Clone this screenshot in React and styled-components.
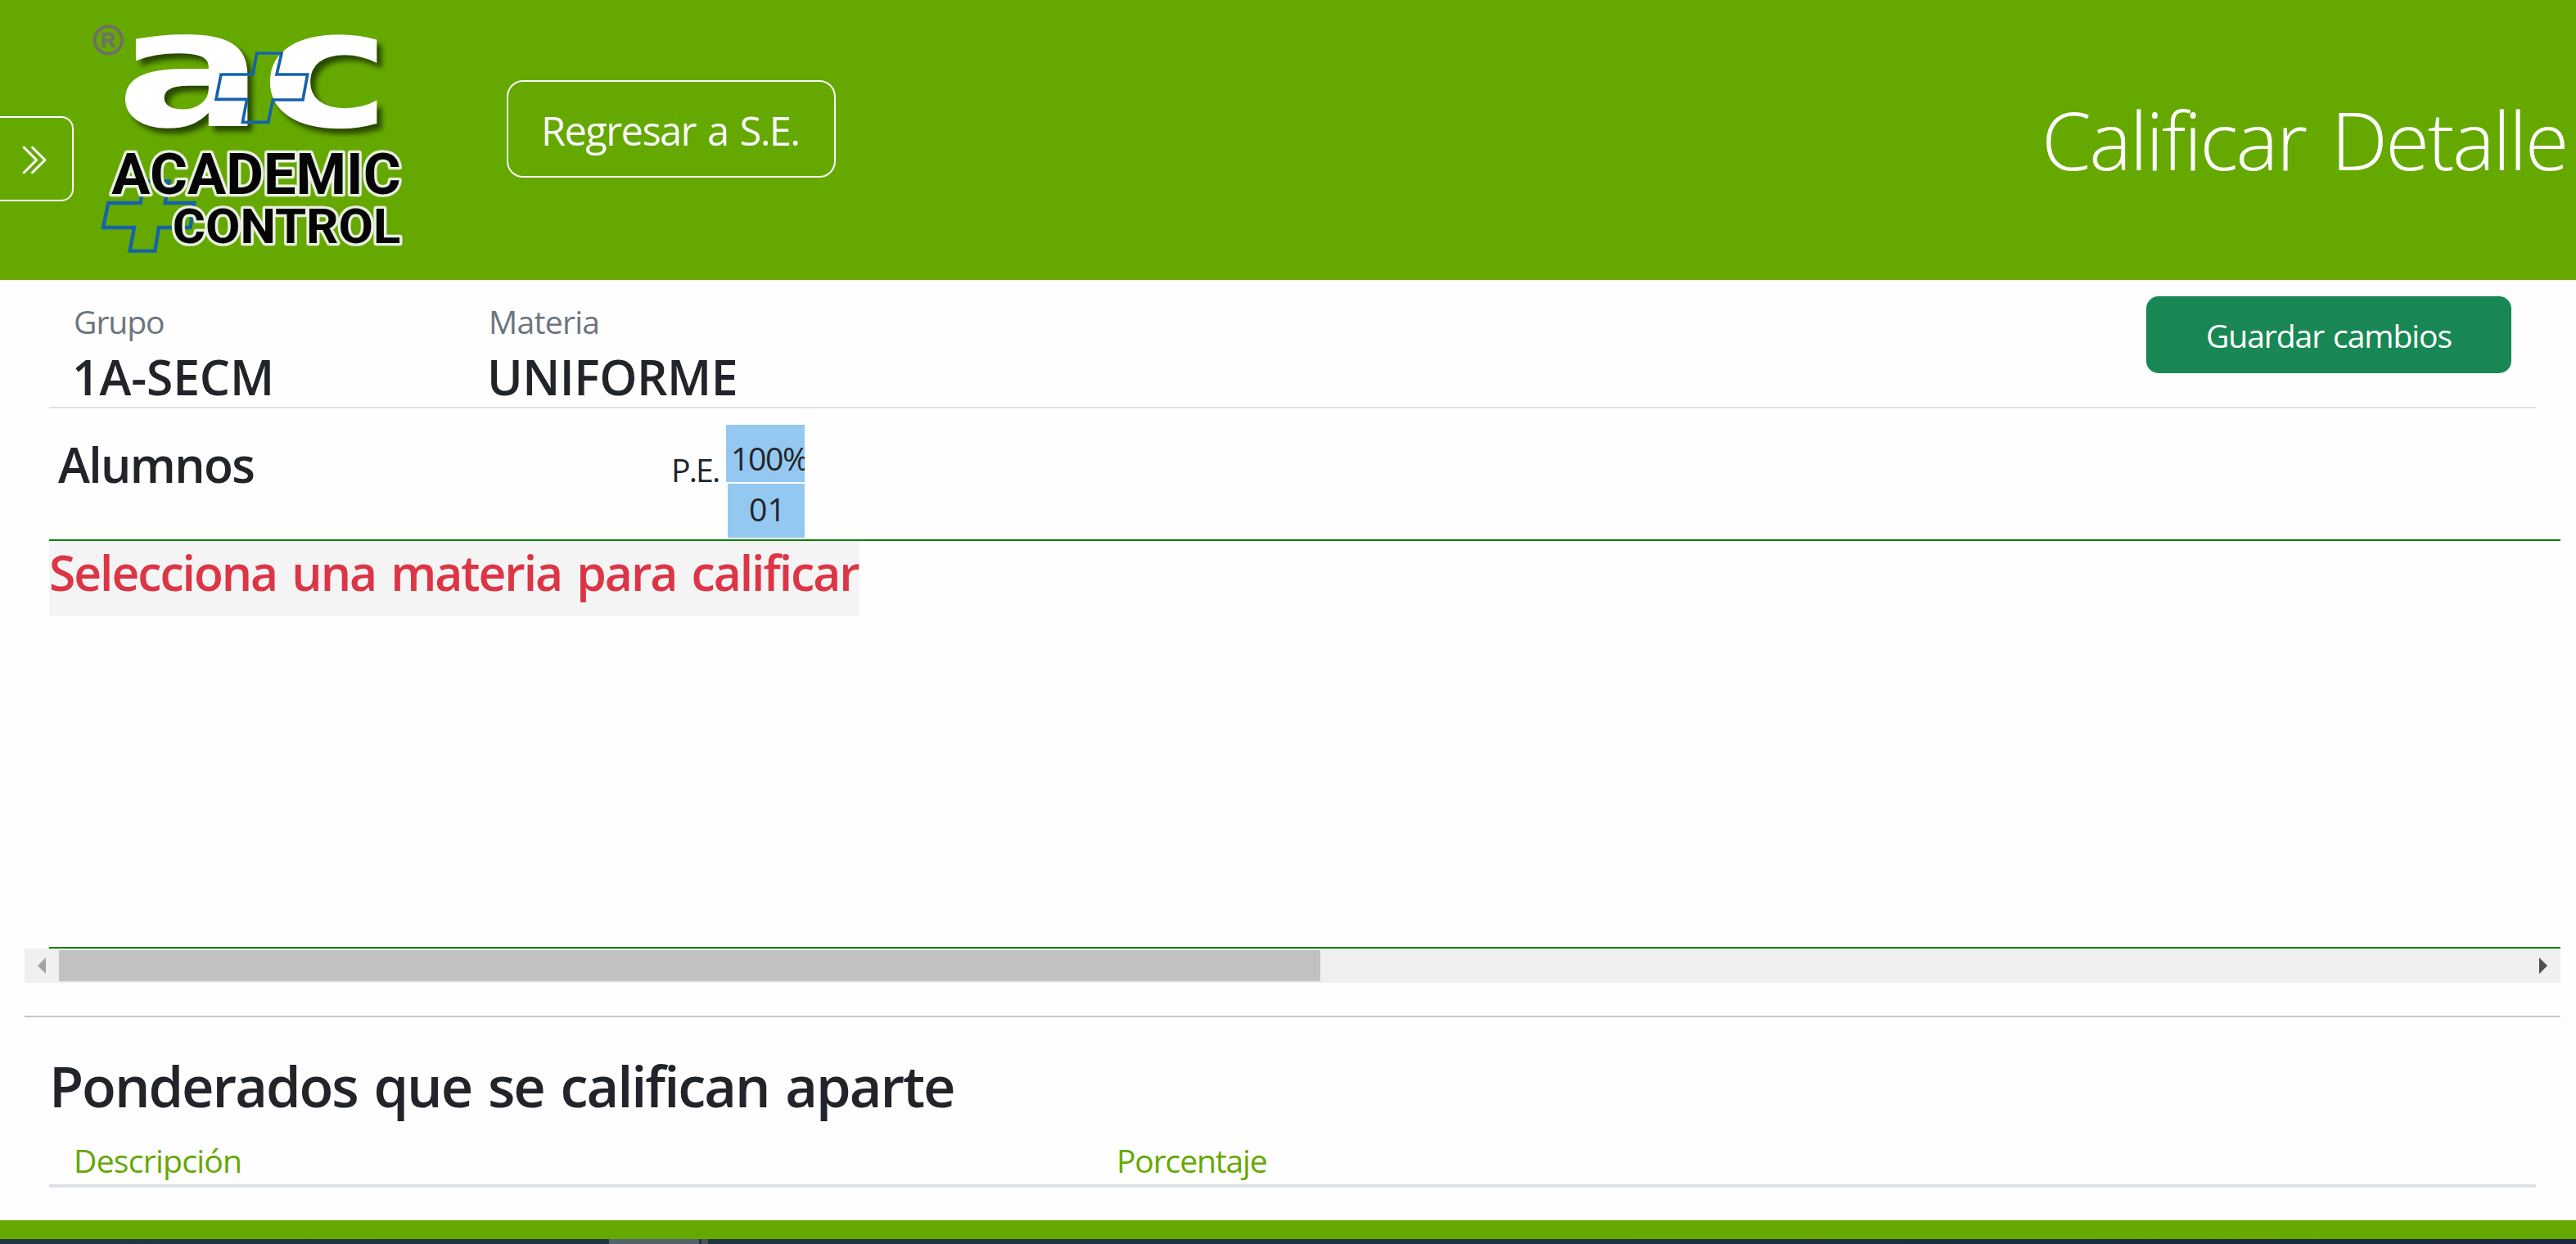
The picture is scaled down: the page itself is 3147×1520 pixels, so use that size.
import React from "react";
import styled, { createGlobalStyle } from "styled-components";
import { BsChevronDoubleRight } from "react-icons/bs";

const GlobalStyle = createGlobalStyle`
  * { box-sizing: border-box; }
  body { margin: 0; background: #fff; }
  h1, h2, h3, p { margin: 0; }
  button { font-family: inherit; cursor: pointer; }
`;

const Page = styled.div`
  width: 3147px;
  height: 1520px;
  overflow: hidden;
  display: flex;
  flex-direction: column;
  background: #fefefe;
  color: #212529;
  font-family: "Open Sans", "Noto Sans", sans-serif;
  font-variant-ligatures: none;
  white-space: nowrap;
`;

const Header = styled.header`
  height: 342px;
  flex: none;
  display: flex;
  align-items: flex-start;
  background: #65a900;
`;

const MenuToggle = styled.button`
  width: 90px;
  height: 104px;
  margin-top: 142px;
  padding: 2px 0 0 19px;
  display: flex;
  align-items: center;
  color: #fff;
  background: transparent;
  border: 2px solid #fff;
  border-left: 0;
  border-radius: 0 15px 15px 0;
`;

const Logo = styled.svg`
  width: 400px;
  height: 300px;
  margin: 20px 0 0 10px;
  flex: none;
  overflow: visible;
`;

const LogoInitials = styled.g`
  fill: #fff;
  font: 700 600px "DejaVu Sans", sans-serif;
  filter: drop-shadow(18px 20px 10px rgba(20, 40, 0, 0.75));
`;

const LogoWord = styled.text`
  font-family: Roboto, sans-serif;
  font-weight: 700;
  font-size: ${(p) => p.$size}px;
  fill: #050505;
  stroke: #e9f0e0;
  stroke-width: 20px;
  stroke-linejoin: round;
  paint-order: stroke;
`;

const LogoMark = styled.text`
  font: 700 76px "Liberation Sans", sans-serif;
  fill: #6f7166;
  stroke: #6f7166;
  stroke-width: 2px;
`;

const BackButton = styled.button`
  width: 402px;
  height: 119px;
  margin: 98px 0 0 119px;
  padding: 3px 0 0 40px;
  text-align: left;
  font-size: 49px;
  letter-spacing: -1.7px;
  word-spacing: 3px;
  color: #f8f9fa;
  background: transparent;
  border: 2px solid #f8f9fa;
  border-radius: 20px;
`;

const Title = styled.h1`
  margin: 103px 11px 0 auto;
  font-size: 98px;
  line-height: 134px;
  font-weight: 300;
  letter-spacing: -2.5px;
  word-spacing: 8px;
  color: #fff;
`;

const Summary = styled.section`
  height: 157px;
  flex: none;
  margin: 0 49px 0 60px;
  padding: 21px 30px 0;
  display: flex;
  align-items: flex-start;
  border-bottom: 2px solid #dee2e6;
`;

const Field = styled.div`
  width: ${(p) => p.$width}px;
`;

const FieldLabel = styled.p`
  font-size: 39.2px;
  line-height: 60px;
  letter-spacing: ${(p) => p.$track}px;
  color: #6c757d;
`;

const FieldValue = styled.h3`
  font-size: 58.8px;
  line-height: 74px;
  font-weight: 600;
  letter-spacing: ${(p) => p.$track}px;
  text-indent: -2px;
`;

const SaveButton = styled.button`
  width: 446px;
  height: 94px;
  margin: -1px 0 0 auto;
  padding: 0;
  font-size: 39.2px;
  letter-spacing: -1.15px;
  word-spacing: 2px;
  color: #fff;
  background: #198754;
  border: 0;
  border-radius: 15px;
`;

const Grades = styled.section`
  height: 660px;
  flex: none;
  margin: 0 19px 0 60px;
  display: flex;
  flex-direction: column;
  border-bottom: 2px solid #008000;
`;

const GradesHead = styled.div`
  height: 162px;
  flex: none;
  padding: 20px 0 0 11px;
  display: flex;
  align-items: flex-start;
  border-bottom: 2px solid #008000;
`;

const StudentsTitle = styled.h3`
  width: 749px;
  padding-top: 8px;
  font-size: 58.8px;
  line-height: 80px;
  font-weight: 600;
  letter-spacing: -1.6px;
`;

const PeriodLabel = styled.span`
  width: 67px;
  padding-top: 25px;
  font-size: 39.2px;
  line-height: 60px;
  letter-spacing: -1.9px;
`;

const Weights = styled.div`
  display: flex;
  flex-direction: column;
  align-items: flex-end;
  gap: 2px;
`;

const WeightCell = styled.div`
  width: 96px;
  height: 70px;
  padding: 11px 0 0 6px;
  overflow: hidden;
  font-size: 39.2px;
  line-height: 60px;
  letter-spacing: -1.4px;
  background: #95c8f0;
`;

const NumberCell = styled.div`
  width: 94px;
  height: 66px;
  padding-left: 26px;
  font-size: 39.2px;
  line-height: 61px;
  background: #95c8f0;
`;

const Notice = styled.h3`
  width: 990px;
  height: 92px;
  font-size: 58.8px;
  line-height: 76px;
  font-weight: 600;
  letter-spacing: -2.05px;
  word-spacing: 5px;
  color: #dc3545;
  background: #f4f4f4;
`;

const ScrollTrack = styled.div`
  height: 42px;
  flex: none;
  margin: 0 19px 0 30px;
  padding: 0 16px;
  display: flex;
  align-items: center;
  background: #f0f0f0;
`;

const ScrollArrow = styled.span`
  width: 0;
  height: 0;
  border: 10px solid transparent;
  border-${(p) => (p.$left ? "right" : "left")}-color: ${(p) => (p.$left ? "#a3a3a3" : "#505050")};
  border-${(p) => (p.$left ? "left" : "right")}-width: 0;
`;

const ScrollThumb = styled.div`
  width: 1541px;
  height: 38px;
  margin: 0 auto 0 16px;
  background: #c1c1c1;
`;

const Divider = styled.div`
  height: 2px;
  flex: none;
  margin: 40px 19px 0 30px;
  background: #c8c8c8;
`;

const Extras = styled.section`
  height: 208px;
  flex: none;
  margin: 0 49px 40px 60px;
  padding-top: 42px;
  border-bottom: 4px solid #dee2e6;
`;

const ExtrasTitle = styled.h2`
  height: 103px;
  font-size: 68.6px;
  line-height: 84px;
  font-weight: 600;
  letter-spacing: -2.05px;
  word-spacing: 4px;
`;

const ExtrasRow = styled.div`
  display: grid;
  grid-template-columns: 1274px 1fr;
  padding-left: 30px;
  font-size: 39.2px;
  line-height: 60px;
  color: #65a900;
`;

const ExtrasCell = styled.span`
  letter-spacing: ${(p) => p.$track}px;
`;

const FooterBar = styled.footer`
  height: 23px;
  flex: none;
  background: #65a900;
`;

const Taskbar = styled.div`
  height: 6px;
  flex: none;
  display: flex;
  padding-left: 744px;
  gap: 3px;
  background: linear-gradient(90deg, #203842, #1d3440 60%, #1a2744);
`;

const TaskbarItem = styled.span`
  width: ${(p) => p.$width}px;
  background: ${(p) => p.$color};
`;

function AcademicLogo() {
  return (
    <Logo viewBox="0 0 1200 900">
      <circle cx="97" cy="87" r="50" fill="none" stroke="#6f7166" strokeWidth="12" />
      <LogoMark x="69" y="114">R</LogoMark>
      <LogoInitials>
        <text transform="translate(158 402) scale(1.35 1)" x="-25">a</text>
        <text transform="translate(690 403) scale(1.35 1)" x="-26">c</text>
      </LogoInitials>
      <g fill="none" stroke="#1562ad">
        <path
          strokeWidth="11"
          d="M641 135H732L714 213H827L810 306H700L683 388H589L605 304H492L510 213H627Z"
        />
        <path
          strokeWidth="13"
          d="M228 604H320L305 684H412L397 774H282L268 860H176L192 774H78L97 684H215Z"
        />
      </g>
      <LogoWord $size={210} x="109" y="650" textLength="1060" lengthAdjust="spacingAndGlyphs">
        ACADEMIC
      </LogoWord>
      <LogoWord $size={179} x="332" y="830" textLength="836" lengthAdjust="spacingAndGlyphs">
        CONTROL
      </LogoWord>
    </Logo>
  );
}

export default function App() {
  return (
    <Page>
      <GlobalStyle />
      <Header>
        <MenuToggle aria-label="Menú">
          <BsChevronDoubleRight size={41} strokeWidth={0.2} />
        </MenuToggle>
        <AcademicLogo />
        <BackButton>Regresar a S.E.</BackButton>
        <Title>Calificar Detalle</Title>
      </Header>

      <Summary>
        <Field $width={507}>
          <FieldLabel $track={-1.1}>Grupo</FieldLabel>
          <FieldValue $track={-0.15}>1A-SECM</FieldValue>
        </Field>
        <Field $width={600}>
          <FieldLabel $track={-0.77}>Materia</FieldLabel>
          <FieldValue $track={-0.46}>UNIFORME</FieldValue>
        </Field>
        <SaveButton>Guardar cambios</SaveButton>
      </Summary>

      <Grades>
        <GradesHead>
          <StudentsTitle>Alumnos</StudentsTitle>
          <PeriodLabel>P.E.</PeriodLabel>
          <Weights>
            <WeightCell>100%</WeightCell>
            <NumberCell>01</NumberCell>
          </Weights>
        </GradesHead>
        <Notice>Selecciona una materia para calificar</Notice>
      </Grades>

      <ScrollTrack>
        <ScrollArrow $left />
        <ScrollThumb />
        <ScrollArrow />
      </ScrollTrack>

      <Divider />

      <Extras>
        <ExtrasTitle>Ponderados que se califican aparte</ExtrasTitle>
        <ExtrasRow>
          <ExtrasCell $track={-0.79}>Descripción</ExtrasCell>
          <ExtrasCell $track={-1.2}>Porcentaje</ExtrasCell>
        </ExtrasRow>
      </Extras>

      <FooterBar />
      <Taskbar>
        <TaskbarItem $width={110} $color="#526469" />
        <TaskbarItem $width={8} $color="#4a5459" />
      </Taskbar>
    </Page>
  );
}
